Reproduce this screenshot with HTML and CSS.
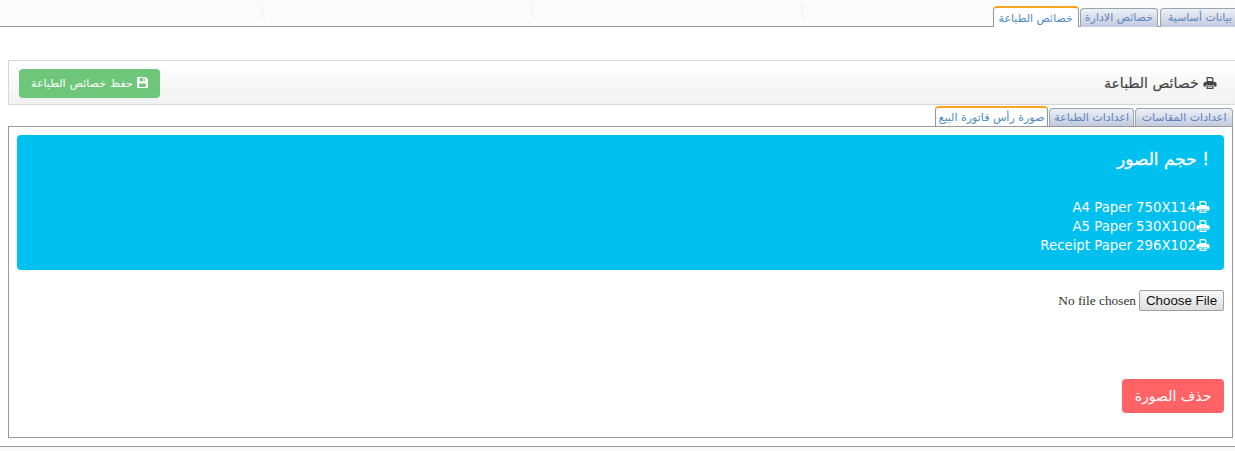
FILE: index.html
```html
<!DOCTYPE html>
<html dir="rtl">
<head>
    <title>خصائص الطباعة</title>
    <link rel="stylesheet" href="styles.css">
</head>
<body>
    <svg width="0" height="0" class="icon-defs">
        <symbol id="icon-print" viewBox="0 0 13 12">
            <path d="M3 0h5.5L10 1.5V5H3z M4.2 1.2v2.8h4.6V2H8V1.2z" fill-rule="evenodd"/>
            <path d="M1.5 5H11.5Q13 5 13 6.5V9.5H10.5V8H2.5V9.5H0V6.5Q0 5 1.5 5z"/>
            <path d="M3 8.6h7V12H3z M4.2 9.6v1.2h4.6V9.6z" fill-rule="evenodd"/>
        </symbol>
        <symbol id="icon-save" viewBox="0 0 12 12">
            <path d="M1 0H9.5L12 2.5V11Q12 12 11 12H1Q0 12 0 11V1Q0 0 1 0z M3 1.2V4.6H8.6V1.2z M2.4 7V10.8H9.6V7z M6.6 1.7H7.9V4H6.6z" fill-rule="evenodd"/>
        </symbol>
    </svg>

    <div class="top-band">
        <ul class="tabs top-tabs">
            <li class="tab">بيانات أساسية</li>
            <li class="tab">خصائص الادارة</li>
            <li class="tab active">خصائص الطباعة</li>
        </ul>
    </div>

    <div class="panel-heading">
        <h3 class="panel-title">
            <svg class="icon"><use href="#icon-print"/></svg>
            خصائص الطباعة
        </h3>
        <button class="btn btn-save">
            <svg class="icon-small"><use href="#icon-save"/></svg>
            حفظ خصائص الطباعة
        </button>
    </div>

    <ul class="tabs inner-tabs">
        <li class="tab">اعدادات المقاسات</li>
        <li class="tab">اعدادات الطباعة</li>
        <li class="tab active">صورة رأس فاتورة البيع</li>
    </ul>

    <div class="tab-content">
        <div class="alert">
            <h4 class="alert-title">! حجم الصور</h4>
            <p class="size-row"><svg class="icon"><use href="#icon-print"/></svg><span dir="ltr">A4 Paper 750X114</span></p>
            <p class="size-row"><svg class="icon"><use href="#icon-print"/></svg><span dir="ltr">A5 Paper 530X100</span></p>
            <p class="size-row"><svg class="icon"><use href="#icon-print"/></svg><span dir="ltr">Receipt Paper 296X102</span></p>
        </div>
        <div class="file-row">
            <input type="file" class="file-input">
        </div>
        <button class="btn btn-delete">حذف الصورة</button>
    </div>

    <div class="footer-band"></div>
</body>
</html>
```

FILE: styles.css
```css
* {
    box-sizing: border-box;
}

html, body {
    height: 100%;
    overflow: hidden;
}

body {
    margin: 0;
    background: #ffffff;
    font-family: 'DejaVu Sans', sans-serif;
    color: #333333;
}

.icon-defs {
    position: absolute;
}

.icon {
    width: 14px;
    height: 12px;
    fill: currentColor;
    vertical-align: -1px;
}

.icon-small {
    width: 11px;
    height: 11px;
    fill: currentColor;
    vertical-align: -1px;
}

/* Faint watermark strips at the top and bottom of the page */
.top-band {
    height: 27px;
    padding-top: 6px;
    background: #fcfcfc url("data:image/svg+xml,%3Csvg xmlns='http://www.w3.org/2000/svg' width='270' height='27'%3E%3Cpath d='M261 2l3 19' stroke='%23f6f6f6' stroke-width='2'/%3E%3C/svg%3E") repeat-x;
}

.footer-band {
    height: 10px;
    margin-top: 8px;
    border-top: 1px solid #999999;
    background: #fafafa;
}

/* Tabs */
.tabs {
    display: flex;
    list-style: none;
    margin: 0;
    padding: 0;
    gap: 1px;
}

.top-tabs {
    height: 21px;
    margin-right: -4px;
    border-bottom: 1px solid #8f9c98;
}

.inner-tabs {
    height: 20px;
    margin: 1px 2px 0 8px;
}

.tab {
    height: 19px;
    margin-top: 2px;
    padding: 0 4px;
    font-size: 11px;
    line-height: 17px;
    color: #5a86bd;
    white-space: nowrap;
    background: linear-gradient(#eef1f7, #c3c9de);
    border: 1px solid #98a5ab;
    border-bottom: none;
    border-radius: 4px 4px 0 0;
}

.tab.active {
    height: 21px;
    margin-top: 0;
    padding: 0 5px;
    line-height: 21px;
    color: #4a8cc4;
    background: #ffffff;
    border: 1px solid #8f9c98;
    border-top: 2px solid #f5a623;
    border-bottom: none;
    position: relative;
    z-index: 1;
}

/* The first top tab runs off the edge of the window */
.top-tabs .tab:first-child {
    margin-left: 1px;
    padding-left: 7px;
    padding-right: 6px;
}

.inner-tabs .tab {
    height: 18px;
    padding: 0 4px;
}

.inner-tabs .tab:first-child {
    padding: 0 5.5px;
}

.inner-tabs .tab.active {
    height: 20px;
    padding: 0 3px;
    line-height: 20px;
}

/* Heading */
.panel-heading {
    display: flex;
    justify-content: space-between;
    align-items: center;
    height: 45px;
    margin: 33px 0 0 8px;
    padding: 1px 18px 0 10px;
    background: linear-gradient(#ffffff, #f2f2f2);
    border: 1px solid #d6d6d6;
    border-right: none;
}

.panel-title {
    margin: 0;
    font-size: 14px;
    font-weight: normal;
    color: #444444;
    -webkit-text-stroke: 0.2px #444444;
}

.btn {
    border: none;
    color: #ffffff;
    font-family: 'DejaVu Sans', sans-serif;
    border-radius: 4px;
}

.btn-save {
    width: 141px;
    height: 29px;
    padding: 1px 0 0;
    font-size: 11px;
    word-spacing: 0.6px;
    background: #6ec67b;
}

/* Content */
.tab-content {
    height: 312px;
    margin: 0 2px 0 8px;
    padding: 8px;
    border: 1px solid #999999;
}

.alert {
    height: 135px;
    padding: 11px 15px;
    color: #ffffff;
    background: #00c0ef;
    border-radius: 4px;
}

.alert-title {
    margin: 0 0 26px;
    font-size: 17px;
    line-height: 26px;
    font-weight: normal;
    -webkit-text-stroke: 0.3px #ffffff;
}

.size-row {
    margin: 0 -1px 0 0;
    font-size: 13.3px;
    line-height: 19px;
}

.file-row {
    margin-top: 20px;
    height: 22px;
}

.file-input {
    font-family: 'Liberation Serif', serif;
    font-size: 13.33px;
}

.file-input::file-selector-button {
    width: 85px;
    height: 21px;
    margin: 0 0 0 3px;
    padding: 0;
    font-family: 'Liberation Sans', sans-serif;
    font-size: 13.33px;
    color: #111111;
    background: linear-gradient(#f8f8f8, #dddddd);
    border: 1px solid #a0a0a0;
    border-radius: 2px;
}

.btn-delete {
    display: block;
    width: 102px;
    height: 34px;
    margin-top: 67px;
    padding-bottom: 2px;
    font-size: 14px;
    background: #ff6366;
}
```
